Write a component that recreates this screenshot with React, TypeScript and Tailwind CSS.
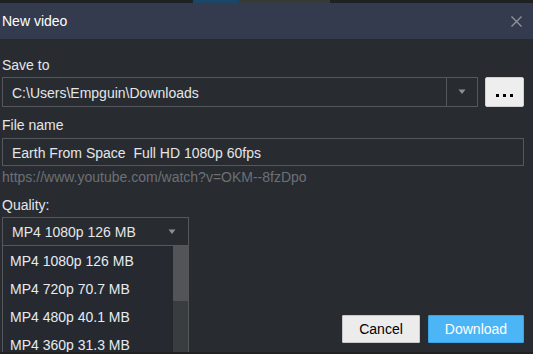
import React from "react";

const items = ["MP4 1080p 126 MB", "MP4 720p 70.7 MB", "MP4 480p 40.1 MB", "MP4 360p 31.3 MB"];

function Caret() {
  return (
    <svg width="8" height="6" viewBox="0 0 8 6">
      <path d="M0.5 0.5 H7.5 L4 5 Z" fill="#8c9096" />
    </svg>
  );
}

export default function App() {
  return (
    <div
      className="relative w-[533px] h-[354px] overflow-hidden bg-[#282c31] text-[14px] leading-[16px] text-[#e4e6e8]"
      style={{ fontFamily: '"Liberation Sans", Arial, sans-serif' }}
    >
      {/* top strip */}
      <div className="flex h-[3px] bg-[#1f2124]">
        <div className="ml-[193px] w-[46px] bg-[#1d4565]" />
        <div className="w-[91px] bg-[#38393b]" />
      </div>
      {/* title bar */}
      <div className="flex h-[36px] items-center justify-between bg-[#343b4e] pl-[2px] pr-[11px]">
        <span className="text-white">New video</span>
        <svg width="11" height="11" viewBox="0 0 11 11">
          <path d="M0.5 0.5 L10.5 10.5 M10.5 0.5 L0.5 10.5" stroke="#8e939c" strokeWidth="1.4" />
        </svg>
      </div>
      {/* body */}
      <div className="px-[2px]">
        <div className="mt-[18px]">Save to</div>
        <div className="mt-[4px] flex items-stretch">
          <div className="flex h-[30px] w-[476px] border border-[#54585d]">
            <div className="flex flex-1 items-center pl-[9px] pt-[1px]">C:\Users\Empguin\Downloads</div>
            <div className="flex w-[31px] items-center justify-center border-l border-[#54585d]">
              <Caret />
            </div>
          </div>
          <div className="ml-[7px] flex h-[30px] w-[39px] items-center justify-center gap-[4px] rounded-[2px] border border-[#d0d0d0] bg-[#eeeeee] pt-[7px]">
            <span className="h-[3px] w-[3px] bg-black" />
            <span className="h-[3px] w-[3px] bg-black" />
            <span className="h-[3px] w-[3px] bg-black" />
          </div>
        </div>
        <div className="mt-[10px]">File name</div>
        <div className="mt-[5px] flex h-[28px] w-[522px] items-center border border-[#54585d] pl-[9px] pt-[1px]">
          Earth From Space&nbsp; Full HD 1080p 60fps
        </div>
        <div className="mt-[3px] text-[#6c7075]">https://www.youtube.com/watch?v=OKM--8fzDpo</div>
        <div className="mt-[12px]">Quality:</div>
        <div className="mt-[4px] flex h-[29px] w-[187px] items-center justify-between border border-[#54585d] pl-[9px] pr-[12px]">
          <span>MP4 1080p 126 MB</span>
          <Caret />
        </div>
      </div>
      {/* dropdown list */}
      <div className="absolute left-[2px] top-[246px] flex h-[110px] w-[187px] border-x border-[#54585d] bg-[#262a30]">
        <div className="flex-1">
          {items.map((t) => (
            <div key={t} className="flex h-[28px] items-center pl-[7px] pt-[2px] text-[#e6ebf0]">
              {t}
            </div>
          ))}
        </div>
        <div className="w-[15px] bg-[#3a3d40]">
          <div className="h-[55px] bg-[#525457]" />
        </div>
      </div>
      {/* buttons */}
      <div className="absolute right-[9px] top-[315px] flex gap-[8px]">
        <button className="h-[28px] w-[78px] rounded-[1px] border border-[#c9c9c9] bg-[#ececec] text-[14px] text-black">
          Cancel
        </button>
        <button className="h-[28px] w-[96px] rounded-[1px] border border-[#3aa3e6] bg-[#4bb5f5] text-[14px] text-white">
          Download
        </button>
      </div>
      <div className="absolute bottom-0 left-0 h-[2px] w-full bg-[#1f2124]" />
    </div>
  );
}
